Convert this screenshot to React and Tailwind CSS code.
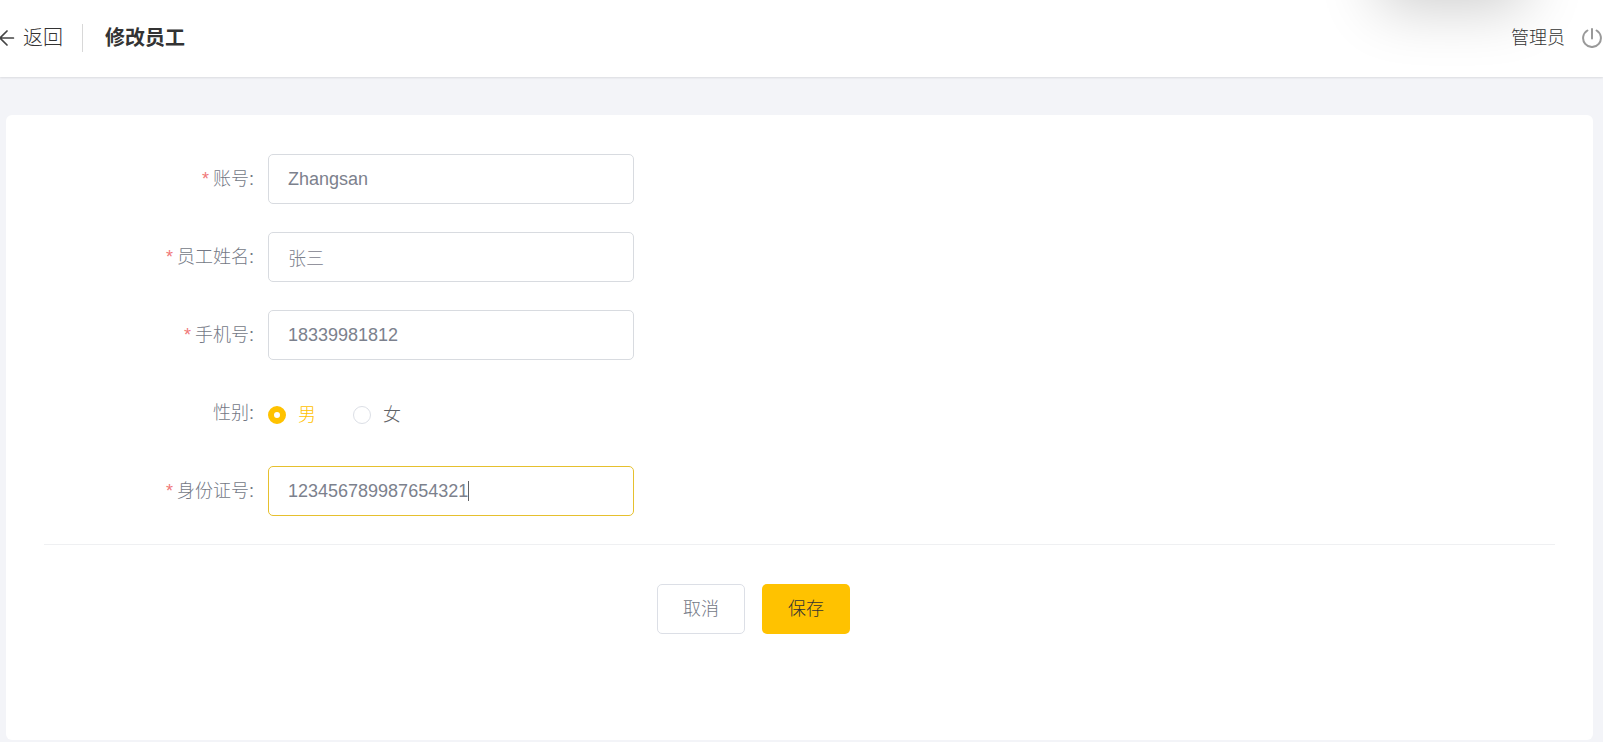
import React, { useState } from 'react';

function BackArrow() {
  return (
    <svg className="h-4 w-4 shrink-0" viewBox="0 0 16 16" fill="none" stroke="#444" strokeWidth="1.7" strokeLinecap="round" strokeLinejoin="round" aria-hidden="true">
      <path d="M14.4 8H1M8 1L1 8l7 7" />
    </svg>
  );
}

function PowerIcon() {
  return (
    <svg className="h-5 w-5" viewBox="0 0 20 20" fill="none" stroke="#999" strokeWidth="2" strokeLinecap="round" aria-hidden="true">
      <path d="M10 1v9.4" />
      <path d="M5.4 2.5A8.9 8.9 0 1 0 14.6 2.5" />
    </svg>
  );
}

const labelStyle = 'w-56 shrink-0 pr-3.5 text-right text-[#737885]';

function Field({ id, label, initial, active }) {
  const [value, setValue] = useState(initial);
  return (
    <div className="flex items-center">
      <label htmlFor={id} className={labelStyle}>
        <span className="mr-1 text-[#f07878]">*</span>
        {label}:
      </label>
      <div className="relative w-full max-w-[366px]">
        <input
          id={id}
          type="text"
          value={value}
          onChange={(e) => setValue(e.target.value)}
          className={`block h-[50px] w-full rounded-[5px] border bg-white px-[19px] text-[#7c818d] outline-none ${active ? 'border-[#e6c02e] caret-transparent' : 'border-[#d8dbe0]'}`}
        />
        {active && (
          <span className="pointer-events-none absolute inset-y-0 left-5 flex items-center" aria-hidden="true">
            <span className="invisible">{value}</span>
            <span className="h-5 w-px bg-[#606266]" />
          </span>
        )}
      </div>
    </div>
  );
}

function Radio({ label, checked, onSelect }) {
  return (
    <label className={`flex items-center gap-3 ${checked ? 'text-[#ffc200]' : 'text-[#606266]'}`}>
      <input
        type="radio"
        name="sex"
        checked={checked}
        onChange={onSelect}
        className={`h-[18px] w-[18px] appearance-none rounded-full bg-white ${checked ? 'border-[6px] border-[#ffc200]' : 'border border-[#dcdfe6]'}`}
      />
      {label}
    </label>
  );
}

export default function App() {
  const [sex, setSex] = useState('男');
  return (
    <div className="flex min-h-screen flex-col overflow-hidden bg-[#f3f4f8] font-['Liberation_Sans','Noto_Sans_CJK_SC',sans-serif] text-lg leading-6 font-light">
      <header className="relative flex h-[77px] items-center justify-between bg-white pr-px pb-px shadow-[0_1px_2px_rgba(0,0,0,0.1)]">
        <div className="pointer-events-none absolute -top-20 right-[96px] h-[70px] w-[110px] shadow-[0_0_60px_18px_rgba(0,0,0,0.2)]" aria-hidden="true" />
        <div className="flex items-center text-xl text-[#333]">
          <a href="#back" className="-ml-px flex items-center gap-2">
            <BackArrow />
            返回
          </a>
          <span className="mr-[22px] ml-[19px] h-7 w-px bg-[#d8d8d8]" />
          <h1 className="font-bold">修改员工</h1>
        </div>
        <div className="relative flex items-center gap-[17px] text-[#333]">
          <span>管理员</span>
          <button type="button" aria-label="退出"><PowerIcon /></button>
        </div>
      </header>
      <main className="flex flex-1 pt-[38px] pr-[10px] pb-0.5 pl-1.5">
        <form className="flex-1 rounded-md bg-white px-[38px] pt-[39px]" onSubmit={(e) => e.preventDefault()}>
          <div className="flex flex-col gap-7 border-b border-[#eff0f2] pb-7">
            <Field id="account" label="账号" initial="Zhangsan" />
            <Field id="name" label="员工姓名" initial="张三" />
            <Field id="phone" label="手机号" initial="18339981812" />
            <div role="radiogroup" aria-labelledby="sexLabel" className="flex h-[50px] items-center">
              <span id="sexLabel" className={labelStyle}>性别:</span>
              <div className="flex gap-[37px] pt-1">
                <Radio label="男" checked={sex === '男'} onSelect={() => setSex('男')} />
                <Radio label="女" checked={sex === '女'} onSelect={() => setSex('女')} />
              </div>
            </div>
            <Field id="idNumber" label="身份证号" initial="123456789987654321" active />
          </div>
          <div className="flex justify-center gap-[17px] pt-[39px] pr-[92px]">
            <button type="button" className="h-[50px] w-22 rounded-[5px] border border-[#dcdfe6] bg-white text-[#737885]">取消</button>
            <button type="submit" className="h-[50px] w-22 rounded-[5px] bg-[#ffc200] text-[#333]">保存</button>
          </div>
        </form>
      </main>
    </div>
  );
}
